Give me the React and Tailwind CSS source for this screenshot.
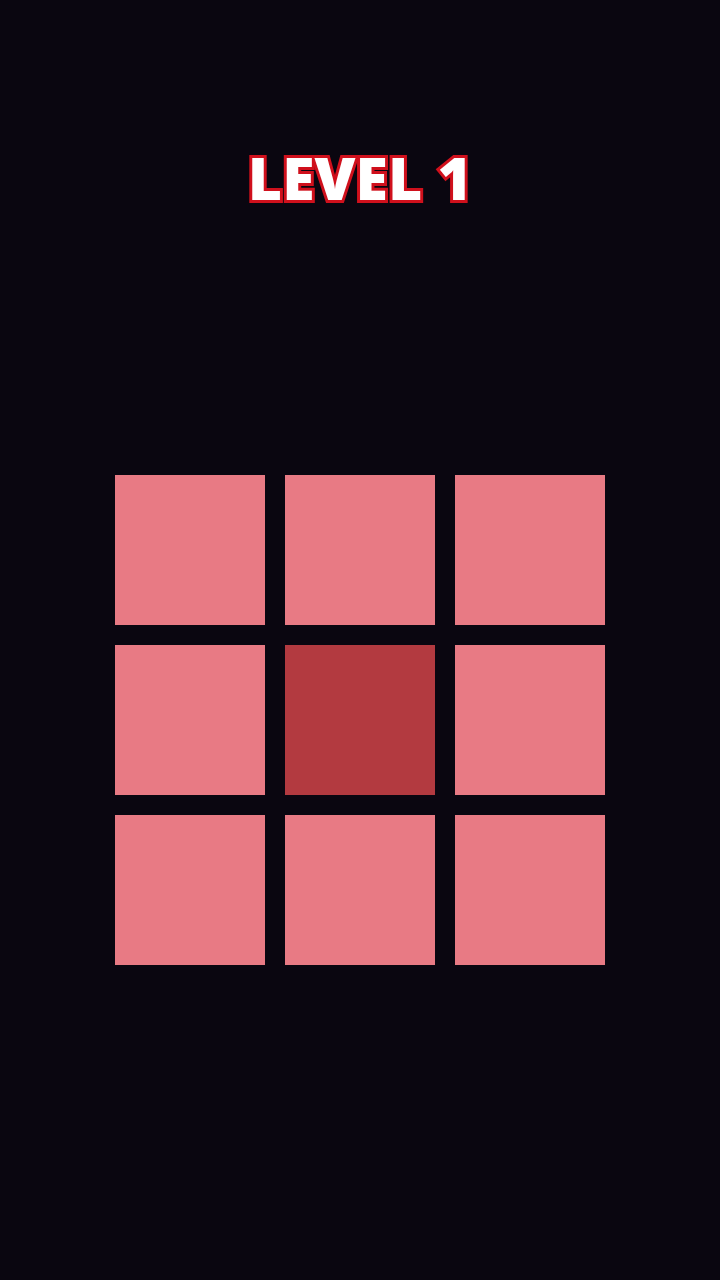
const tiles = [0, 1, 2, 3, 4, 5, 6, 7, 8]

export default function App() {
    return (
        <div className="w-[720px] h-[1280px] bg-[#0a0610] flex flex-col items-center font-['Open_Sans',sans-serif]">
            {/* Level heading */}
            <div className="mt-[138px] h-[78px] flex items-center">
                <span className="text-[59px] leading-none font-extrabold text-white [-webkit-text-stroke:6px_#d0101c] [paint-order:stroke_fill]">
                    LEVEL 1
                </span>
            </div>

            {/* Board */}
            <div className="mt-[259px] grid grid-cols-3 gap-5">
                {tiles.map((i) => (
                    <div
                        key={i}
                        className={`w-[150px] h-[150px] ${
                            i === 4 ? 'bg-[#b33a40]' : 'bg-[#e87a84]'
                        }`}
                    />
                ))}
            </div>
        </div>
    )
}
